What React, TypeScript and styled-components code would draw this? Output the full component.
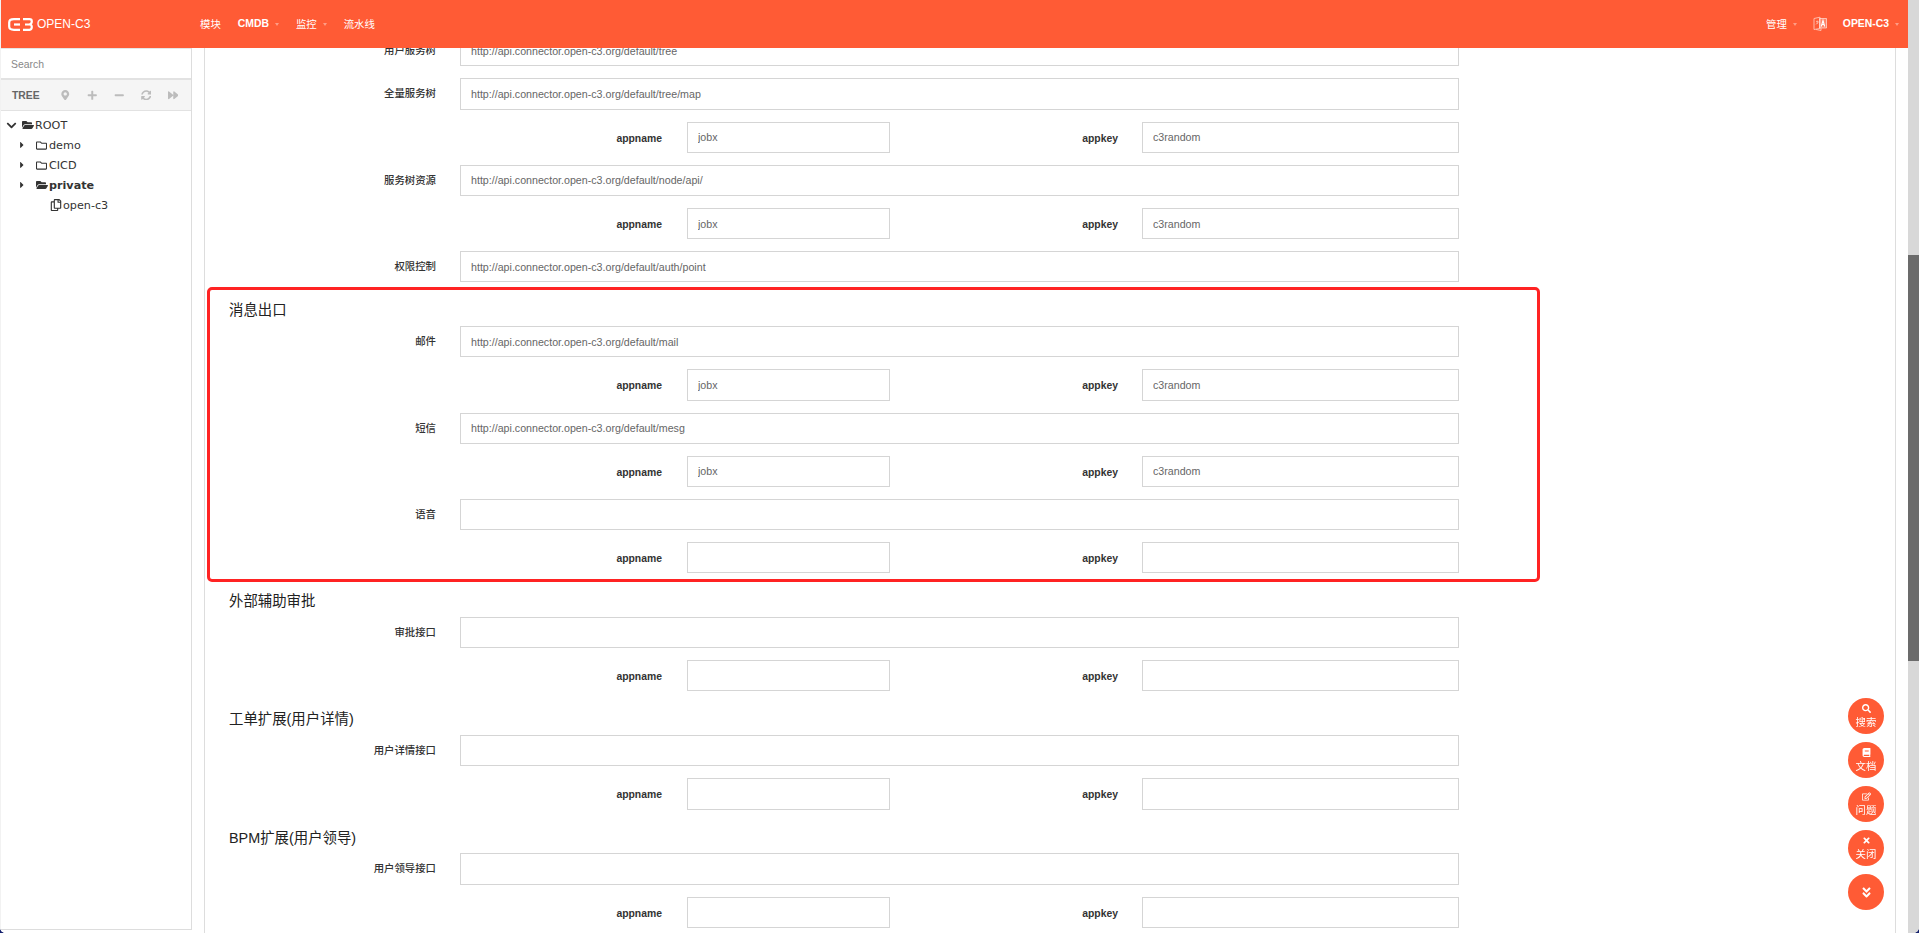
import React from "react";
import styled, { createGlobalStyle } from "styled-components";
import {
  FaMapMarkerAlt,
  FaPlus,
  FaMinus,
  FaSyncAlt,
  FaForward,
  FaSearch,
  FaBook,
  FaRegEdit,
  FaTimes,
  FaAngleDoubleDown,
  FaChevronDown,
  FaCaretRight,
  FaFolderOpen,
  FaRegFolder,
  FaRegCopy,
} from "react-icons/fa";

const BRAND = "#ff5b35";
const FONT = `"Liberation Sans", "Noto Sans CJK SC", sans-serif`;

const GlobalStyle = createGlobalStyle`
  html, body {
    margin: 0;
    height: 100%;
    overflow: hidden;
    background: #fff;
    font-family: ${FONT};
  }
`;

const API = "http://api.connector.open-c3.org/default";

interface Endpoint {
  label: string;
  url?: string;
  creds?: boolean;
  filled?: boolean;
}

const lead: Endpoint[] = [
  { label: "用户服务树", url: `${API}/tree` },
  { label: "全量服务树", url: `${API}/tree/map`, creds: true, filled: true },
  { label: "服务树资源", url: `${API}/node/api/`, creds: true, filled: true },
  { label: "权限控制", url: `${API}/auth/point` },
];

const sections: { title: string; highlight?: boolean; items: Endpoint[] }[] = [
  {
    title: "消息出口",
    highlight: true,
    items: [
      { label: "邮件", url: `${API}/mail`, creds: true, filled: true },
      { label: "短信", url: `${API}/mesg`, creds: true, filled: true },
      { label: "语音", creds: true },
    ],
  },
  { title: "外部辅助审批", items: [{ label: "审批接口", creds: true }] },
  { title: "工单扩展(用户详情)", items: [{ label: "用户详情接口", creds: true }] },
  { title: "BPM扩展(用户领导)", items: [{ label: "用户领导接口", creds: true }] },
];

const EndpointRows: React.FC<{ item: Endpoint }> = ({ item }) => (
  <>
    <Row>
      <RowLabel>{item.label}</RowLabel>
      <Field $width={999} readOnly value={item.url ?? ""} />
    </Row>
    {item.creds && (
      <Row>
        <KeyLabel $width={433} $gap={25}>appname</KeyLabel>
        <Field $width={203} readOnly value={item.filled ? "jobx" : ""} />
        <KeyLabel $width={228} $gap={24}>appkey</KeyLabel>
        <Field $width={317} readOnly value={item.filled ? "c3random" : ""} />
      </Row>
    )}
  </>
);

const Logo = () => (
  <svg width="25" height="13" viewBox="0 0 25 13" fill="none" stroke="#fff" strokeWidth="2.2">
    <path d="M12 1.2H6Q1.2 1.2 1.2 4.5V8.5Q1.2 11.8 6 11.8H12" />
    <path d="M6 6.5H12" />
    <path d="M15 1.2H21.5Q23.8 1.2 23.8 3.4T21.5 6.5H17M21.5 6.5Q23.8 6.5 23.8 9T21.5 11.8H15" />
  </svg>
);

const LangIcon = () => (
  <svg width="14" height="15" viewBox="0 0 14 15" fill="none">
    <path d="M1 2.5L7 1.2V12.5L1 13.5Z" stroke="#ffc4b5" strokeWidth="0.9" />
    <path d="M3 5.5H5.5M4.2 4.5V8M3 8.5L5.5 6" stroke="#ffc4b5" strokeWidth="0.7" />
    <path d="M6.5 2.5H13.5V12H6.5Z" fill="#fff" fillOpacity=".25" stroke="#fff" strokeOpacity=".7" strokeWidth="0.8" />
    <path d="M8.3 10.5L10 4.5L11.7 10.5M9 8.5H11" stroke="#fff" strokeWidth="1.1" />
    <path d="M3 13.5L8 14.5V12" stroke="#ffc4b5" strokeWidth="0.9" />
  </svg>
);

const App: React.FC = () => (
  <Page>
    <GlobalStyle />
    <Viewport>
      <NavBar>
        <Brand>
          <Logo />
          <BrandName>OPEN-C3</BrandName>
        </Brand>
        <NavGroup>
          <NavItem>模块</NavItem>
          <NavItem $bold>CMDB<Caret /></NavItem>
          <NavItem>监控<Caret /></NavItem>
          <NavItem>流水线</NavItem>
        </NavGroup>
        <NavRight>
          <NavItem>管理<Caret /></NavItem>
          <NavItem><LangIcon /></NavItem>
          <NavItem $bold>OPEN-C3<Caret /></NavItem>
        </NavRight>
      </NavBar>
      <Body>
        <Sidebar>
          <SearchBox>Search</SearchBox>
          <TreeBar>
            <TreeTitle>TREE</TreeTitle>
            <TreeTool><FaMapMarkerAlt /></TreeTool>
            <TreeTool><FaPlus /></TreeTool>
            <TreeTool><FaMinus /></TreeTool>
            <TreeTool><FaSyncAlt /></TreeTool>
            <TreeTool><FaForward /></TreeTool>
          </TreeBar>
          <Tree>
            <TreeRow $depth={0}>
              <Arrow><FaChevronDown size={11} /></Arrow>
              <NodeIcon><FaFolderOpen size={12} /></NodeIcon>
              ROOT
            </TreeRow>
            <TreeRow $depth={1}>
              <Arrow><BranchCaret size={10} /></Arrow>
              <NodeIcon><FaRegFolder size={11} /></NodeIcon>
              demo
            </TreeRow>
            <TreeRow $depth={1}>
              <Arrow><BranchCaret size={10} /></Arrow>
              <NodeIcon><FaRegFolder size={11} /></NodeIcon>
              CICD
            </TreeRow>
            <TreeRow $depth={1} $bold>
              <Arrow><BranchCaret size={10} /></Arrow>
              <NodeIcon><FaFolderOpen size={12} /></NodeIcon>
              private
            </TreeRow>
            <TreeRow $depth={2}>
              <Arrow />
              <NodeIcon><FaRegCopy size={12} /></NodeIcon>
              open-c3
            </TreeRow>
          </Tree>
        </Sidebar>
        <Panel>
          <ScrollContent>
            {lead.map((item) => (
              <EndpointRows key={item.label} item={item} />
            ))}
            {sections.map((section) => (
              <Section key={section.title}>
                {section.highlight && <Highlight />}
                <SectionTitle>{section.title}</SectionTitle>
                {section.items.map((item) => (
                  <EndpointRows key={item.label} item={item} />
                ))}
              </Section>
            ))}
          </ScrollContent>
        </Panel>
      </Body>
    </Viewport>
    <ScrollTrack>
      <ScrollThumb />
    </ScrollTrack>
    <FloatMenu>
      <FloatButton><FaSearch />搜索</FloatButton>
      <FloatButton><FaBook />文档</FloatButton>
      <FloatButton><FaRegEdit />问题</FloatButton>
      <FloatButton><FaTimes />关闭</FloatButton>
      <FloatButton><FaAngleDoubleDown size={13} /></FloatButton>
    </FloatMenu>
    <Corner $side="left" />
    <Corner $side="right" />
  </Page>
);

const Page = styled.div`
  display: flex;
  height: 933px;
  overflow: hidden;
  padding-left: 1px;
  box-sizing: border-box;
  background: #f2f2f2;
`;

const Viewport = styled.div`
  flex: 1;
  min-width: 0;
  display: flex;
  flex-direction: column;
  background: #fff;
`;

const NavBar = styled.header`
  flex: none;
  height: 48px;
  display: flex;
  align-items: center;
  padding-right: 9px;
  background: ${BRAND};
  color: #fff;
  font-size: 10.4px;
  position: relative;
  z-index: 2;
`;

const Brand = styled.div`
  width: 199px;
  padding-left: 7px;
  box-sizing: border-box;
  display: flex;
  align-items: center;
  gap: 4px;
`;

const BrandName = styled.span`
  font-size: 12px;
  color: #fff;
`;

const NavGroup = styled.nav`
  display: flex;
  align-items: center;
  gap: 17px;
  margin-top: -1px;
`;

const NavRight = styled(NavGroup)`
  margin-left: auto;
  gap: 16px;
`;

const NavItem = styled.span<{ $bold?: boolean }>`
  display: flex;
  align-items: center;
  font-weight: ${(p) => (p.$bold ? 700 : 400)};
  color: #fff;
  white-space: nowrap;
`;

const Caret = styled.i`
  width: 0;
  height: 0;
  margin-left: 6px;
  margin-top: 1px;
  border-top: 3px solid rgba(255, 255, 255, 0.4);
  border-left: 2.5px solid transparent;
  border-right: 2.5px solid transparent;
`;

const Body = styled.div`
  flex: 1;
  min-height: 0;
  display: flex;
`;

const Sidebar = styled.aside`
  flex: none;
  width: 191px;
  box-sizing: border-box;
  height: 882px;
  border-right: 1px solid #ddd;
  border-bottom: 1px solid #ddd;
`;

const SearchBox = styled.div`
  height: 32px;
  box-sizing: border-box;
  padding: 1px 0 0 10px;
  display: flex;
  align-items: center;
  font-size: 10.4px;
  color: #888;
  border-top: 1px solid #e5e5e5;
  border-bottom: 2px solid #e2e2e2;
`;

const TreeBar = styled.div`
  height: 31px;
  box-sizing: border-box;
  display: flex;
  align-items: center;
  padding-left: 11px;
  background: #f5f5f5;
  border-bottom: 1px solid #e2e2e2;
`;

const TreeTitle = styled.span`
  width: 39.5px;
  font-size: 10.4px;
  font-weight: 700;
  color: #666;
`;

const TreeTool = styled.span`
  width: 27px;
  display: flex;
  justify-content: center;
  font-size: 10.5px;
  color: #bcbcbc;
`;

const Tree = styled.div`
  padding-top: 4px;
`;

const TreeRow = styled.div<{ $depth: number; $bold?: boolean }>`
  height: 20px;
  display: flex;
  align-items: center;
  padding-left: ${(p) => 5 + p.$depth * 14}px;
  font-family: "DejaVu Sans", sans-serif;
  font-size: 11.2px;
  font-weight: ${(p) => (p.$bold ? 700 : 400)};
  color: #333;
`;

const Arrow = styled.span`
  flex: none;
  width: 16px;
  display: flex;
  color: #333;
`;

const BranchCaret = styled(FaCaretRight)`
  margin-left: -3px;
`;

const NodeIcon = styled.span`
  flex: none;
  width: 13px;
  display: flex;
`;

const Panel = styled.main`
  flex: 1;
  min-width: 0;
  margin: 0 12px;
  padding-left: 24px;
  border-left: 1px solid #ddd;
  border-right: 1px solid #ddd;
  overflow: hidden;
`;

const ScrollContent = styled.div`
  margin-top: -12.8px;
`;

const Section = styled.section`
  position: relative;
`;

const Highlight = styled.div`
  position: absolute;
  top: -7px;
  bottom: -9px;
  left: -22px;
  right: 355px;
  border: 3px solid #ff2323;
  border-radius: 5px;
  pointer-events: none;
`;

const SectionTitle = styled.h4`
  margin: 0;
  height: 31.8px;
  line-height: 33px;
  font-size: 14.4px;
  font-weight: 400;
  color: #222;
`;

const Row = styled.div`
  display: flex;
  align-items: flex-start;
  margin-bottom: 12px;
`;

const RowLabel = styled.label`
  flex: none;
  width: 207px;
  margin-right: 24px;
  height: 31.2px;
  line-height: 31px;
  text-align: right;
  font-size: 10.4px;
  font-weight: 500;
  color: #333;
`;

const KeyLabel = styled.label<{ $width: number; $gap: number }>`
  flex: none;
  width: ${(p) => p.$width}px;
  margin-right: ${(p) => p.$gap}px;
  height: 31.2px;
  line-height: 33px;
  text-align: right;
  font-size: 10.4px;
  font-weight: 700;
  color: #333;
`;

const Field = styled.input<{ $width: number }>`
  flex: none;
  width: ${(p) => p.$width}px;
  height: 31.2px;
  box-sizing: border-box;
  padding: 0 10px;
  border: 1px solid #d5d5d5;
  border-radius: 0;
  outline: none;
  background: #fff;
  font-family: ${FONT};
  font-size: 10.67px;
  color: #666;
`;

const ScrollTrack = styled.div`
  flex: none;
  width: 11px;
  background: #d8d8d8;
`;

const ScrollThumb = styled.div`
  height: 406px;
  margin-top: 255px;
  background: #6b6b6b;
`;

const FloatMenu = styled.div`
  position: fixed;
  right: 35px;
  bottom: 23px;
  display: flex;
  flex-direction: column;
  gap: 8px;
`;

const FloatButton = styled.button`
  width: 36px;
  height: 36px;
  padding: 0;
  border: none;
  border-radius: 50%;
  background: ${BRAND};
  color: #fff;
  font-family: ${FONT};
  font-size: 10.4px;
  line-height: 13px;
  display: flex;
  flex-direction: column;
  align-items: center;
  justify-content: center;
  gap: 3px;

  svg {
    font-size: 9px;
  }
`;

const Corner = styled.i<{ $side: "left" | "right" }>`
  position: fixed;
  bottom: 0;
  ${(p) => p.$side}: 0;
  width: 5px;
  height: 5px;
  background: radial-gradient(
    circle at ${(p) => (p.$side === "left" ? "100% 0" : "0 0")},
    transparent 4.6px,
    #14206e 5.2px
  );
`;

export default App;
